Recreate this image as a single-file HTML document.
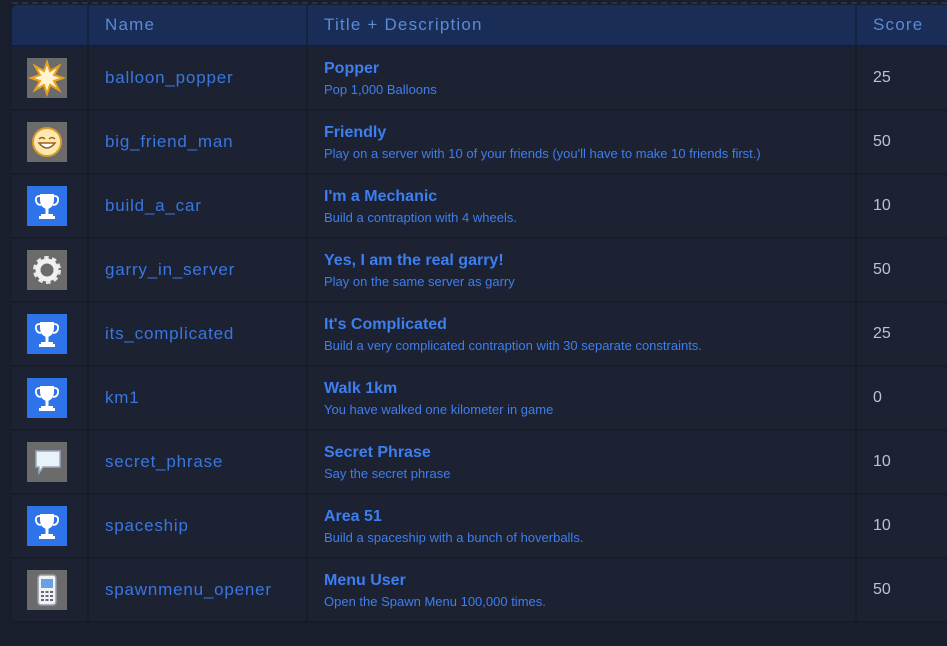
<!DOCTYPE html>
<html><head><style>
html,body{margin:0;padding:0;width:947px;height:646px;overflow:hidden;background:#181e2b;font-family:"Liberation Sans",sans-serif}
.dash{position:absolute;left:12px;top:2px;width:935px;border-top:2px dashed #2a3142}
table{position:absolute;left:12px;top:5px;width:940px;border-collapse:collapse;background:#1c2232;border-radius:6px;overflow:hidden}
th{background:#1a2d56;height:40px;padding:0 0 0 16px;text-align:left;font-weight:normal;color:#5a8ad6;font-size:17px;letter-spacing:1.2px;border-right:2px solid #152341;border-bottom:2px solid #14203a}
td{height:62px;border-right:2px solid #171c28;border-bottom:2px solid #171c28;padding:0 0 0 16px;vertical-align:middle}
td.ic{padding:0 6px 0 0;text-align:center;width:69px}
td.n{color:#3a76e0;font-size:17px;letter-spacing:0.8px;width:201px}
td.t{width:531px}
.tt{color:#3d7ef0;font-weight:bold;font-size:16px;margin-top:0}
.d{color:#3d7ef0;font-size:13px;margin-top:4px}
td.s{color:#b5c4dd;font-size:16px}
.icon{display:inline-block;width:40px;height:40px;background:#6b6b6b;vertical-align:middle;position:relative}
.icon.b{background:#2f73ea}
svg{display:block}
</style></head><body>
<div class="dash"></div>
<table>
<tr><th style="width:59px"></th><th>Name</th><th>Title + Description</th><th>Score</th></tr>
<tr><td class="ic"><span class="icon"><svg width="40" height="40"><polygon points="20,4 23,13 32,8 27,17 36,20 27,23 32,32 23,27 20,36 17,27 8,32 13,23 4,20 13,17 8,8 17,13" fill="#fff3d0" stroke="#e8a020" stroke-width="2"/></svg></span></td><td class="n">balloon_popper</td><td class="t"><div class="tt">Popper</div><div class="d">Pop 1,000 Balloons</div></td><td class="s">25</td></tr>
<tr><td class="ic"><span class="icon"><svg width="40" height="40"><circle cx="20" cy="20" r="14" fill="#fde9b0" stroke="#d99a2a" stroke-width="2"/><path d="M12 17q3-3 6 0M22 17q3-3 6 0" stroke="#a0601a" stroke-width="1.5" fill="none"/><path d="M12 21q8 10 16 0z" fill="#fff" stroke="#a0601a" stroke-width="1.5"/></svg></span></td><td class="n">big_friend_man</td><td class="t"><div class="tt">Friendly</div><div class="d">Play on a server with 10 of your friends (you'll have to make 10 friends first.)</div></td><td class="s">50</td></tr>
<tr><td class="ic"><span class="icon b"><svg width="40" height="40"><path d="M13 8h14v5q0 9-7 10q-7-1-7-10z" fill="#fff"/><path d="M13 10q-5 0-4 5q1 4 5 4M27 10q5 0 4 5q-1 4-5 4" fill="none" stroke="#fff" stroke-width="1.8"/><rect x="18.5" y="22" width="3" height="6" fill="#fff"/><rect x="14" y="28" width="12" height="2" fill="#fff"/><rect x="12" y="30" width="16" height="3" fill="#fff"/></svg></span></td><td class="n">build_a_car</td><td class="t"><div class="tt">I'm a Mechanic</div><div class="d">Build a contraption with 4 wheels.</div></td><td class="s">10</td></tr>
<tr><td class="ic"><span class="icon"><svg width="40" height="40"><circle cx="20" cy="20" r="11" fill="none" stroke="#e8e8e8" stroke-width="6" stroke-dasharray="4 3"/><circle cx="20" cy="20" r="9" fill="none" stroke="#f0f0f0" stroke-width="5"/><circle cx="20" cy="20" r="4" fill="#6b6b6b"/></svg></span></td><td class="n">garry_in_server</td><td class="t"><div class="tt">Yes, I am the real garry!</div><div class="d">Play on the same server as garry</div></td><td class="s">50</td></tr>
<tr><td class="ic"><span class="icon b"><svg width="40" height="40"><path d="M13 8h14v5q0 9-7 10q-7-1-7-10z" fill="#fff"/><path d="M13 10q-5 0-4 5q1 4 5 4M27 10q5 0 4 5q-1 4-5 4" fill="none" stroke="#fff" stroke-width="1.8"/><rect x="18.5" y="22" width="3" height="6" fill="#fff"/><rect x="14" y="28" width="12" height="2" fill="#fff"/><rect x="12" y="30" width="16" height="3" fill="#fff"/></svg></span></td><td class="n">its_complicated</td><td class="t"><div class="tt">It's Complicated</div><div class="d">Build a very complicated contraption with 30 separate constraints.</div></td><td class="s">25</td></tr>
<tr><td class="ic"><span class="icon b"><svg width="40" height="40"><path d="M13 8h14v5q0 9-7 10q-7-1-7-10z" fill="#fff"/><path d="M13 10q-5 0-4 5q1 4 5 4M27 10q5 0 4 5q-1 4-5 4" fill="none" stroke="#fff" stroke-width="1.8"/><rect x="18.5" y="22" width="3" height="6" fill="#fff"/><rect x="14" y="28" width="12" height="2" fill="#fff"/><rect x="12" y="30" width="16" height="3" fill="#fff"/></svg></span></td><td class="n">km1</td><td class="t"><div class="tt">Walk 1km</div><div class="d">You have walked one kilometer in game</div></td><td class="s">0</td></tr>
<tr><td class="ic"><span class="icon"><svg width="40" height="40"><path d="M9 9h24v16h-17l-4 6v-6h-3z" fill="#e8f2fa" stroke="#9ab" stroke-width="1.5"/></svg></span></td><td class="n">secret_phrase</td><td class="t"><div class="tt">Secret Phrase</div><div class="d">Say the secret phrase</div></td><td class="s">10</td></tr>
<tr><td class="ic"><span class="icon b"><svg width="40" height="40"><path d="M13 8h14v5q0 9-7 10q-7-1-7-10z" fill="#fff"/><path d="M13 10q-5 0-4 5q1 4 5 4M27 10q5 0 4 5q-1 4-5 4" fill="none" stroke="#fff" stroke-width="1.8"/><rect x="18.5" y="22" width="3" height="6" fill="#fff"/><rect x="14" y="28" width="12" height="2" fill="#fff"/><rect x="12" y="30" width="16" height="3" fill="#fff"/></svg></span></td><td class="n">spaceship</td><td class="t"><div class="tt">Area 51</div><div class="d">Build a spaceship with a bunch of hoverballs.</div></td><td class="s">10</td></tr>
<tr><td class="ic"><span class="icon"><svg width="40" height="40"><rect x="11" y="5" width="18" height="30" rx="3" fill="#eef2f5" stroke="#99a" stroke-width="1.5"/><rect x="14" y="9" width="12" height="9" fill="#6aa0e0"/><g fill="#667"><rect x="14" y="21" width="3" height="2"/><rect x="18.5" y="21" width="3" height="2"/><rect x="23" y="21" width="3" height="2"/><rect x="14" y="25" width="3" height="2"/><rect x="18.5" y="25" width="3" height="2"/><rect x="23" y="25" width="3" height="2"/><rect x="14" y="29" width="3" height="2"/><rect x="18.5" y="29" width="3" height="2"/><rect x="23" y="29" width="3" height="2"/></g></svg></span></td><td class="n">spawnmenu_opener</td><td class="t"><div class="tt">Menu User</div><div class="d">Open the Spawn Menu 100,000 times.</div></td><td class="s">50</td></tr>
</table>
</body></html>
